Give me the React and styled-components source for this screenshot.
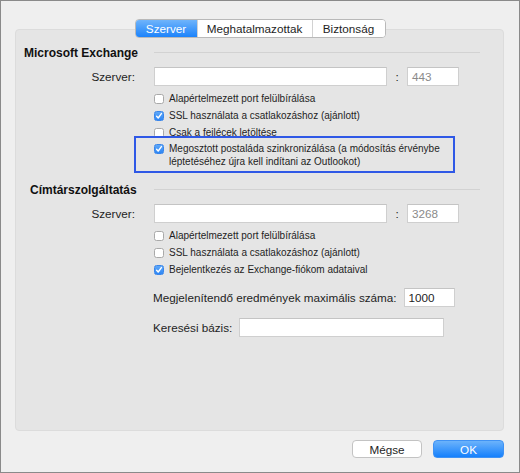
import React from "react";
import styled, { createGlobalStyle } from "styled-components";

const Global = createGlobalStyle`
  html, body { margin: 0; padding: 0; background: #efefef; }
  body { font-family: "Liberation Sans", Arial, sans-serif; color: #1e1e1e; }
  * { box-sizing: border-box; }
`;

const Window = styled.div`
  width: 520px;
  height: 473px;
  border: 1px solid #8a8a8a;
  background: #efefef;
  display: flex;
  flex-direction: column;
  padding: 18px 15px 14px 14px;
`;

const TabBar = styled.div`
  align-self: center;
  position: relative;
  z-index: 1;
  display: flex;
  height: 19px;
  margin-left: 1px;
  border: 1px solid #b9b9b9;
  border-radius: 4px;
  background: #fff;
  overflow: hidden;
`;

const Tab = styled.div`
  width: ${(p) => p.$w}px;
  display: flex;
  align-items: center;
  justify-content: center;
  font-size: 11.7px;
  color: ${(p) => (p.$active ? "#fff" : "#1e1e1e")};
  background: ${(p) =>
    p.$active ? "linear-gradient(#6fb4fb, #1c83fb)" : "#fff"};
  & + & { border-left: 1px solid #d2d2d2; }
`;

const Panel = styled.div`
  flex: 1;
  margin-top: -9px;
  background: #e5e5e5;
  border: 1px solid #dcdcdc;
  border-radius: 4px;
  padding: 15px 23px 0 0;
  display: flex;
  flex-direction: column;
`;

const HeadingRow = styled.div`
  display: flex;
  align-items: center;
  height: 16px;
  margin-top: ${(p) => p.$top || 0}px;
`;

const Heading = styled.div`
  width: 138px;
  padding-left: ${(p) => p.$indent}px;
  font-size: 12px;
  font-weight: bold;
  color: #111;
  white-space: nowrap;
`;

const Rule = styled.div`
  flex: 1;
  height: 1px;
  margin-top: -1px;
  background: #d2d2d2;
`;

const FieldRow = styled.div`
  display: flex;
  align-items: center;
  height: 19px;
  margin-top: 6px;
`;

const Label = styled.div`
  width: 119px;
  margin-right: 19px;
  text-align: right;
  font-size: 11.7px;
  color: #1e1e1e;
`;

const Input = styled.div`
  width: ${(p) => p.$w}px;
  height: 19px;
  background: #fff;
  border: 1px solid #cfcfcf;
  border-top-color: #c4c4c4;
  font-size: 11.7px;
  color: ${(p) => (p.$muted ? "#8a8a8a" : "#1e1e1e")};
  padding: 0 4px;
  display: flex;
  align-items: center;
`;

const Colon = styled.div`
  width: 20px;
  text-align: center;
  font-size: 11.7px;
`;

const Options = styled.div`
  display: flex;
  flex-direction: column;
  padding-left: 138px;
  margin-top: 4px;
`;

const OptionRow = styled.div`
  display: flex;
  align-items: center;
  height: 17px;
  font-size: 10px;
  color: #1e1e1e;
`;

const Highlight = styled.div`
  display: flex;
  align-items: flex-start;
  width: 321px;
  margin: -5px 0 0 -20px;
  padding: 4px 0 3px 18px;
  border: 2px solid #2f58e6;
  font-size: 10px;
  line-height: 13px;
  color: #1e1e1e;
  & > span:first-child { margin-top: 1.5px; }
`;

const Box = styled.span`
  flex: none;
  width: 10px;
  height: 10px;
  margin-right: 5px;
  border-radius: 2.5px;
  display: inline-flex;
  align-items: center;
  justify-content: center;
  background: ${(p) => (p.$on ? "linear-gradient(#5fa8f8, #2d86f5)" : "#fff")};
  border: 1px solid ${(p) => (p.$on ? "#3a86ea" : "#a9a9a9")};
`;

const Check = ({ on }) => (
  <Box $on={on}>
    {on && (
      <svg width="8" height="8" viewBox="0 0 8 8">
        <path d="M1.6 4.3 L3.2 6 L6.4 1.6" fill="none" stroke="#fff" strokeWidth="1.4" strokeLinecap="round" strokeLinejoin="round" />
      </svg>
    )}
  </Box>
);

const Option = ({ on, children }) => (
  <OptionRow>
    <Check on={on} />
    <span>{children}</span>
  </OptionRow>
);

const InlineField = styled.div`
  display: flex;
  align-items: center;
  height: 19px;
  padding-left: 137px;
  margin-top: ${(p) => p.$top}px;
  font-size: 11.7px;
  color: #1e1e1e;
  & > span { margin-right: 7px; white-space: nowrap; }
`;

const Footer = styled.div`
  display: flex;
  justify-content: flex-end;
  gap: 11px;
  margin-top: 9px;
`;

const Button = styled.div`
  width: ${(p) => p.$w}px;
  height: 18px;
  border-radius: 4px;
  display: flex;
  align-items: center;
  justify-content: center;
  font-size: 11.7px;
  color: ${(p) => (p.$primary ? "#fff" : "#1e1e1e")};
  background: ${(p) =>
    p.$primary ? "linear-gradient(#6cb3fb, #1580fc)" : "#fff"};
  border: 1px solid ${(p) => (p.$primary ? "#3f92f4" : "#c3c3c3")};
`;

export default function App() {
  return (
    <>
      <Global />
      <Window>
        <TabBar>
          <Tab $w={61} $active>Szerver</Tab>
          <Tab $w={115}>Meghatalmazottak</Tab>
          <Tab $w={73}>Biztonság</Tab>
        </TabBar>
        <Panel>
          <HeadingRow>
            <Heading $indent={8}>Microsoft Exchange</Heading>
            <Rule />
          </HeadingRow>
          <FieldRow>
            <Label>Szerver:</Label>
            <Input $w={233} />
            <Colon>:</Colon>
            <Input $w={52} $muted>443</Input>
          </FieldRow>
          <Options>
            <Option>Alapértelmezett port felülbírálása</Option>
            <Option on>SSL használata a csatlakozáshoz (ajánlott)</Option>
            <Option>Csak a fejlécek letöltése</Option>
            <Highlight>
              <Check on />
              <span>
                Megosztott postaláda szinkronizálása (a módosítás érvénybe
                <br />
                léptetéséhez újra kell indítani az Outlookot)
              </span>
            </Highlight>
          </Options>
          <HeadingRow $top={9}>
            <Heading $indent={14}>Címtárszolgáltatás</Heading>
            <Rule />
          </HeadingRow>
          <FieldRow>
            <Label>Szerver:</Label>
            <Input $w={233} />
            <Colon>:</Colon>
            <Input $w={52} $muted>3268</Input>
          </FieldRow>
          <Options>
            <Option>Alapértelmezett port felülbírálása</Option>
            <Option>SSL használata a csatlakozáshoz (ajánlott)</Option>
            <Option on>Bejelentkezés az Exchange-fiókom adataival</Option>
          </Options>
          <InlineField $top={10}>
            <span>Megjelenítendő eredmények maximális száma:</span>
            <Input $w={51}>1000</Input>
          </InlineField>
          <InlineField $top={11}>
            <span>Keresési bázis:</span>
            <Input $w={205} />
          </InlineField>
        </Panel>
        <Footer>
          <Button $w={70}>Mégse</Button>
          <Button $w={71} $primary>OK</Button>
        </Footer>
      </Window>
    </>
  );
}
